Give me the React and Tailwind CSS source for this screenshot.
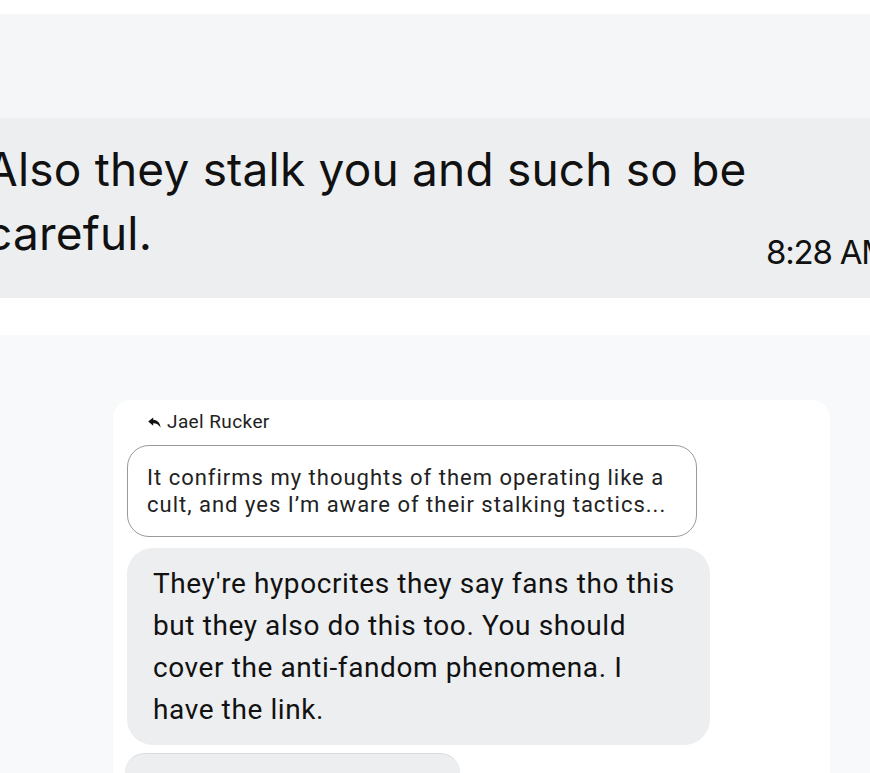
function ReplyIcon() {
  return (
    <svg width="13" height="11" viewBox="0 0 13 11" className="shrink-0">
      <path d="M5.2 0.4 L0.2 4.6 L5.2 8.8 L5.2 6.2 C8.3 6.1 10.6 7.4 12.6 10.6 C12.2 6.1 9.7 3.1 5.2 2.8 Z" fill="#111" />
    </svg>
  );
}

export default function App() {
  return (
    <div className="w-[870px] h-[773px] overflow-hidden bg-white flex flex-col font-['Inter','Liberation_Sans',sans-serif] text-[#111]">
      {/* zoomed bubble */}
      <div className="h-[14px] bg-white shrink-0" />
      <div className="h-[104px] bg-[#f5f6f8] shrink-0" />
      <div className="h-[180px] bg-[#eceef0] shrink-0 flex items-start overflow-hidden">
        <p className="ml-[-14px] mt-[19px] w-[770px] shrink-0 text-[46px] leading-[64px] tracking-[0.2px]">
          Also they stalk you and such so be careful.
        </p>
        <span className="ml-[10px] mt-[114px] shrink-0 whitespace-nowrap text-[33px] leading-[40px] tracking-[-1.2px]">
          8:28 AM
        </span>
      </div>
      <div className="h-[37px] bg-white shrink-0" />

      {/* chat card */}
      <div className="flex-1 bg-[#f8f9fa] pt-[65px] pl-[113px] overflow-hidden">
        <div className="w-[717px] h-full bg-white rounded-t-[18px] px-[14px] pt-[11px] font-['Roboto','Liberation_Sans',sans-serif]">
          <div className="flex items-center gap-[6px] pl-[21px] h-[22px]">
            <ReplyIcon />
            <span className="text-[19px] leading-[22px] tracking-[0.4px] text-[#222]">Jael Rucker</span>
          </div>
          <div className="mt-[12px] w-[570px] border border-[#9a9a9a] rounded-[22px] bg-white pl-[19px] pr-[20px] pt-[18px] pb-[18px]">
            <p className="text-[22px] leading-[27px] tracking-[1px] text-[#222]">
              It confirms my thoughts of them operating like a cult, and yes I’m aware of their stalking tactics...
            </p>
          </div>
          <div className="mt-[11px] w-[583px] bg-[#eceef0] rounded-[26px] pl-[26px] pr-[27px] pt-[15px] pb-[14px]">
            <p className="text-[28px] leading-[42px] tracking-[0.6px]">
              They're hypocrites they say fans tho this but they also do this too. You should cover the anti-fandom phenomena. I have the link.
            </p>
          </div>
          <div className="mt-[8px] ml-[-2px] w-[335px] h-[30px] bg-[#eceef0] border-t border-[#d9dbde] rounded-t-[20px]" />
        </div>
      </div>
    </div>
  );
}
